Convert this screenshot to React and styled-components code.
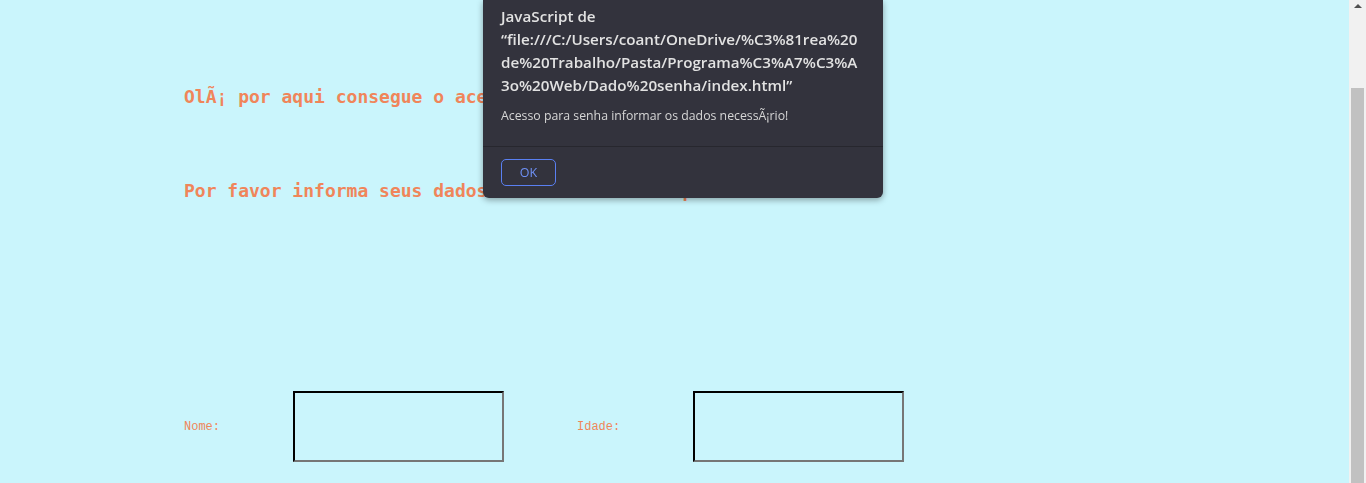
import styled, { createGlobalStyle } from 'styled-components';

const GlobalStyle = createGlobalStyle`
    html, body {
        margin: 0;
        padding: 0;
        height: 100%;
        overflow: hidden;
        background-color: #caf5fc;
    }
    #root {
        height: 100%;
    }
`

const Window = styled.div`
    display: flex;
    height: 100vh;
    background-color: #caf5fc;
`

const Page = styled.main`
    flex: 1;
    padding: 86px 0 0 184px;
    overflow: hidden;
`

const Heading = styled.h2`
    margin: 0 0 ${({ gap }) => gap}px;
    font-family: "DejaVu Sans Mono", "Liberation Mono", monospace;
    font-size: 18px;
    line-height: 22px;
    font-weight: bold;
    color: #f0855a;
    white-space: nowrap;
`

const Form = styled.form`
    display: flex;
    align-items: center;
    margin-top: 189px;
`

const Label = styled.label`
    width: ${({ width }) => width}px;
    font-family: "Liberation Mono", "DejaVu Sans Mono", monospace;
    font-size: 12px;
    color: #f0855a;
`

const Input = styled.input`
    box-sizing: border-box;
    width: 211px;
    height: 71px;
    margin-right: ${({ gap }) => gap || 0}px;
    padding: 0 6px;
    background: transparent;
    border: 2px inset #767676;
    border-top-color: #1d2220;
    border-left-color: #1d2220;
    border-right-color: #767676;
    border-bottom-color: #767676;

    &:focus {
        outline: none;
    }
`

const Scrollbar = styled.div`
    width: 17px;
    background-color: #f1f1f1;
    display: flex;
    flex-direction: column;
    align-items: center;
`

const Arrow = styled.div`
    margin-top: 4px;
    width: 0;
    height: 0;
    border-left: 4px solid transparent;
    border-right: 4px solid transparent;
    border-bottom: 4px solid #505050;
`

const Thumb = styled.div`
    margin-top: 80px;
    width: 13px;
    flex: 1;
    background-color: #c1c1c1;
`

const Dialog = styled.div`
    position: fixed;
    top: 0;
    left: 483px;
    width: 400px;
    background-color: #33333d;
    border-radius: 0 0 6px 6px;
    box-shadow: 0 2px 6px rgba(0, 0, 0, 0.35);
    font-family: "Open Sans", "Noto Sans", sans-serif;
`

const DialogBody = styled.div`
    padding: 5px 18px 21px;
    border-bottom: 1px solid #27272e;
`

const Title = styled.div`
    font-size: 15.2px;
    font-weight: 600;
    line-height: 23px;
    color: #e2e2e2;

    span {
        display: block;
        white-space: nowrap;
    }
`

const Message = styled.p`
    margin: 10px 0 0;
    font-size: 12.3px;
    line-height: 18px;
    color: #d6d6d6;
`

const DialogFooter = styled.div`
    padding: 12px 18px 12px;
`

const OkButton = styled.button`
    display: block;
    width: 55px;
    height: 27px;
    border: 1px solid #5a80f2;
    border-radius: 5px;
    background: transparent;
    color: #6f91f6;
    font-family: "Open Sans", "Noto Sans", sans-serif;
    font-size: 12.5px;
    cursor: pointer;
`

const App = () => {
    return (
        <>
            <GlobalStyle />
            <Window>
                <Page>
                    <Heading gap={72}>OlÃ¡ por aqui consegue o acesso ao sistema</Heading>
                    <Heading gap={0}>Por favor informa seus dados de forma correta para o acesso</Heading>
                    <Form onSubmit={e => e.preventDefault()}>
                        <Label width={109} htmlFor="nome">Nome:</Label>
                        <Input id="nome" gap={73} />
                        <Label width={116} htmlFor="idade">Idade:</Label>
                        <Input id="idade" />
                    </Form>
                </Page>
                <Scrollbar>
                    <Arrow />
                    <Thumb />
                </Scrollbar>
            </Window>
            <Dialog role="alertdialog">
                <DialogBody>
                    <Title>
                        <span>JavaScript de</span>
                        <span>“file:///C:/Users/coant/OneDrive/%C3%81rea%20</span>
                        <span>de%20Trabalho/Pasta/Programa%C3%A7%C3%A</span>
                        <span>3o%20Web/Dado%20senha/index.html”</span>
                    </Title>
                    <Message>Acesso para senha informar os dados necessÃ¡rio!</Message>
                </DialogBody>
                <DialogFooter>
                    <OkButton>OK</OkButton>
                </DialogFooter>
            </Dialog>
        </>
    )
}

export default App
